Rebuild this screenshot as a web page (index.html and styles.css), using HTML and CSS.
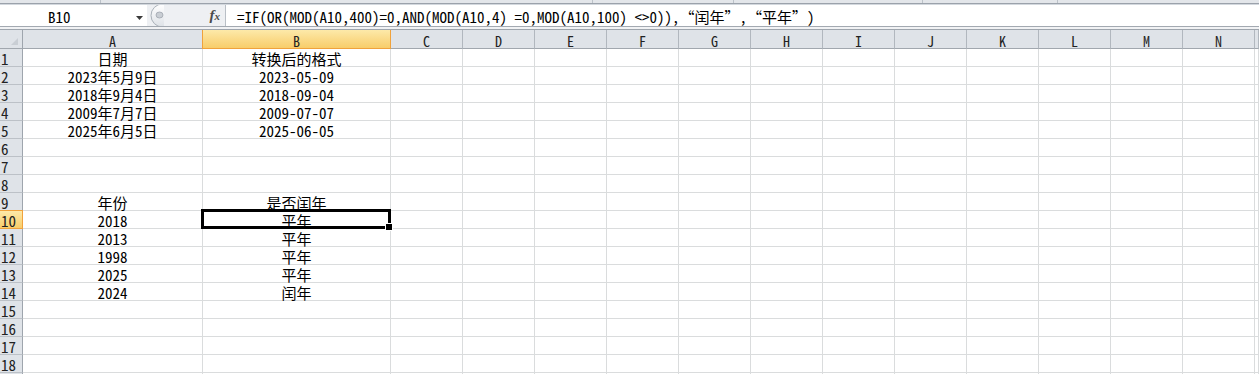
FILE: index.html
```html
<!DOCTYPE html>
<html lang="zh-CN">
<head>
<meta charset="utf-8">
<title>工作表</title>
<link rel="stylesheet" href="styles.css">
</head>
<body>
<div class="edge"><span class="e1"></span><span class="e2"></span><span class="e3"></span><span class="e4"></span><span class="e5"></span></div>
<div class="fbar">
  <div class="namebox">
    <span class="name">B10</span>
    <svg class="dd" width="7" height="4" viewBox="0 0 7 4"><path d="M0 0H7L3.5 4Z" fill="#3a3a3a"/></svg>
  </div>
  <div class="tools">
    <svg class="grip" width="15" height="21" viewBox="0 0 15 21">
      <defs><linearGradient id="gg" x1="0" y1="0" x2="0" y2="1"><stop offset="0" stop-color="#ffffff"/><stop offset="1" stop-color="#dde1e6"/></linearGradient></defs>
      <circle cx="13.5" cy="10.5" r="11.5" fill="url(#gg)" stroke="#a9b0b8"/>
      <ellipse cx="10.5" cy="10" rx="3.5" ry="3" fill="#c9ced4" stroke="#9ea5ad" stroke-width="0.8"/>
    </svg>
    <span class="fx"><i>f</i><i class="fxx">x</i></span>
  </div>
  <div class="formula">=IF(OR(MOD(A10,400)=0,AND(MOD(A10,4) =0,MOD(A10,100) &lt;&gt;0)),<span class="qo">“</span>闰年<span class="qc">”</span>,<span class="qo">“</span>平年<span class="qc">”</span>)</div>
</div>
<div class="gap"></div>
<div class="sheet">
  <div class="h corner"><svg width="22" height="18" viewBox="0 0 22 18"><path d="M18 8V15H11Z" fill="#c9ced4"/></svg></div>
  <div class="h">A</div><div class="h sel">B</div><div class="h">C</div><div class="h">D</div><div class="h">E</div><div class="h">F</div><div class="h">G</div><div class="h">H</div><div class="h">I</div><div class="h">J</div><div class="h">K</div><div class="h">L</div><div class="h">M</div><div class="h">N</div><div class="h"></div>

  <div class="rh">1</div><div class="c">日期</div><div class="c">转换后的格式</div><div class="c"></div><div class="c"></div><div class="c"></div><div class="c"></div><div class="c"></div><div class="c"></div><div class="c"></div><div class="c"></div><div class="c"></div><div class="c"></div><div class="c"></div><div class="c"></div><div class="c"></div>
  <div class="rh">2</div><div class="c">2023年5月9日</div><div class="c">2023-05-09</div><div class="c"></div><div class="c"></div><div class="c"></div><div class="c"></div><div class="c"></div><div class="c"></div><div class="c"></div><div class="c"></div><div class="c"></div><div class="c"></div><div class="c"></div><div class="c"></div><div class="c"></div>
  <div class="rh">3</div><div class="c">2018年9月4日</div><div class="c">2018-09-04</div><div class="c"></div><div class="c"></div><div class="c"></div><div class="c"></div><div class="c"></div><div class="c"></div><div class="c"></div><div class="c"></div><div class="c"></div><div class="c"></div><div class="c"></div><div class="c"></div><div class="c"></div>
  <div class="rh">4</div><div class="c">2009年7月7日</div><div class="c">2009-07-07</div><div class="c"></div><div class="c"></div><div class="c"></div><div class="c"></div><div class="c"></div><div class="c"></div><div class="c"></div><div class="c"></div><div class="c"></div><div class="c"></div><div class="c"></div><div class="c"></div><div class="c"></div>
  <div class="rh">5</div><div class="c">2025年6月5日</div><div class="c">2025-06-05</div><div class="c"></div><div class="c"></div><div class="c"></div><div class="c"></div><div class="c"></div><div class="c"></div><div class="c"></div><div class="c"></div><div class="c"></div><div class="c"></div><div class="c"></div><div class="c"></div><div class="c"></div>
  <div class="rh">6</div><div class="c"></div><div class="c"></div><div class="c"></div><div class="c"></div><div class="c"></div><div class="c"></div><div class="c"></div><div class="c"></div><div class="c"></div><div class="c"></div><div class="c"></div><div class="c"></div><div class="c"></div><div class="c"></div><div class="c"></div>
  <div class="rh">7</div><div class="c"></div><div class="c"></div><div class="c"></div><div class="c"></div><div class="c"></div><div class="c"></div><div class="c"></div><div class="c"></div><div class="c"></div><div class="c"></div><div class="c"></div><div class="c"></div><div class="c"></div><div class="c"></div><div class="c"></div>
  <div class="rh">8</div><div class="c"></div><div class="c"></div><div class="c"></div><div class="c"></div><div class="c"></div><div class="c"></div><div class="c"></div><div class="c"></div><div class="c"></div><div class="c"></div><div class="c"></div><div class="c"></div><div class="c"></div><div class="c"></div><div class="c"></div>
  <div class="rh">9</div><div class="c">年份</div><div class="c">是否闰年</div><div class="c"></div><div class="c"></div><div class="c"></div><div class="c"></div><div class="c"></div><div class="c"></div><div class="c"></div><div class="c"></div><div class="c"></div><div class="c"></div><div class="c"></div><div class="c"></div><div class="c"></div>
  <div class="rh sel">10</div><div class="c">2018</div><div class="c cur">平年</div><div class="c"></div><div class="c"></div><div class="c"></div><div class="c"></div><div class="c"></div><div class="c"></div><div class="c"></div><div class="c"></div><div class="c"></div><div class="c"></div><div class="c"></div><div class="c"></div><div class="c"></div>
  <div class="rh">11</div><div class="c">2013</div><div class="c">平年</div><div class="c"></div><div class="c"></div><div class="c"></div><div class="c"></div><div class="c"></div><div class="c"></div><div class="c"></div><div class="c"></div><div class="c"></div><div class="c"></div><div class="c"></div><div class="c"></div><div class="c"></div>
  <div class="rh">12</div><div class="c">1998</div><div class="c">平年</div><div class="c"></div><div class="c"></div><div class="c"></div><div class="c"></div><div class="c"></div><div class="c"></div><div class="c"></div><div class="c"></div><div class="c"></div><div class="c"></div><div class="c"></div><div class="c"></div><div class="c"></div>
  <div class="rh">13</div><div class="c">2025</div><div class="c">平年</div><div class="c"></div><div class="c"></div><div class="c"></div><div class="c"></div><div class="c"></div><div class="c"></div><div class="c"></div><div class="c"></div><div class="c"></div><div class="c"></div><div class="c"></div><div class="c"></div><div class="c"></div>
  <div class="rh">14</div><div class="c">2024</div><div class="c">闰年</div><div class="c"></div><div class="c"></div><div class="c"></div><div class="c"></div><div class="c"></div><div class="c"></div><div class="c"></div><div class="c"></div><div class="c"></div><div class="c"></div><div class="c"></div><div class="c"></div><div class="c"></div>
  <div class="rh">15</div><div class="c"></div><div class="c"></div><div class="c"></div><div class="c"></div><div class="c"></div><div class="c"></div><div class="c"></div><div class="c"></div><div class="c"></div><div class="c"></div><div class="c"></div><div class="c"></div><div class="c"></div><div class="c"></div><div class="c"></div>
  <div class="rh">16</div><div class="c"></div><div class="c"></div><div class="c"></div><div class="c"></div><div class="c"></div><div class="c"></div><div class="c"></div><div class="c"></div><div class="c"></div><div class="c"></div><div class="c"></div><div class="c"></div><div class="c"></div><div class="c"></div><div class="c"></div>
  <div class="rh">17</div><div class="c"></div><div class="c"></div><div class="c"></div><div class="c"></div><div class="c"></div><div class="c"></div><div class="c"></div><div class="c"></div><div class="c"></div><div class="c"></div><div class="c"></div><div class="c"></div><div class="c"></div><div class="c"></div><div class="c"></div>
  <div class="rh">18</div><div class="c"></div><div class="c"></div><div class="c"></div><div class="c"></div><div class="c"></div><div class="c"></div><div class="c"></div><div class="c"></div><div class="c"></div><div class="c"></div><div class="c"></div><div class="c"></div><div class="c"></div><div class="c"></div><div class="c"></div>
  <div class="rh"></div><div class="c"></div><div class="c"></div><div class="c"></div><div class="c"></div><div class="c"></div><div class="c"></div><div class="c"></div><div class="c"></div><div class="c"></div><div class="c"></div><div class="c"></div><div class="c"></div><div class="c"></div><div class="c"></div><div class="c"></div>
</div>
</body>
</html>
```
FILE: styles.css
```css
* { box-sizing: border-box; }
html, body { margin: 0; padding: 0; }
body {
  width: 1259px;
  height: 374px;
  overflow: hidden;
  background: #fff;
  color: #000;
  font-family: "Noto Sans Mono CJK SC", "Noto Sans CJK SC", sans-serif;
}

/* bottom edge of the ribbon */
.edge {
  display: flex;
  height: 4px;
  background: #e3e6ea;
  border-bottom: 1px solid #9ba2ab;
}
.edge span { height: 3px; border-right: 1px solid #bcc2c9; }
.e1 { width: 101px; }
.e2 { width: 492px; }
.e3 { width: 141px; }
.e4 { width: 189px; }
.e5 { width: 135px; }

/* formula bar */
.fbar {
  display: flex;
  height: 23px;
  border-top: 1px solid #d3d8de;
  border-bottom: 1px solid #a3a9b1;
  background: #fff;
}
.namebox {
  width: 147px;
  display: flex;
  align-items: flex-start;
  background: #fff;
}
.name {
  margin-left: 48px;
  padding-top: 3px;
  font-size: 15px;
  line-height: 18px;
}
.dd {
  margin-left: auto;
  margin-right: 4px;
  margin-top: 11px;
}
.tools {
  width: 79px;
  display: flex;
  align-items: center;
  background: #eef0f3;
  border-right: 1px solid #b9bfc6;
}
.grip { margin-left: 2px; }
.fx {
  margin-left: auto;
  margin-right: 5px;
  font-family: "Liberation Serif", serif;
  font-weight: bold;
  font-size: 15px;
  color: #4a4a4a;
  line-height: 21px;
}
.fx i { font-style: italic; }
.fx .fxx { font-size: 11px; }
.formula {
  flex: 1;
  padding: 3px 0 0 11px;
  font-size: 15px;
  line-height: 18px;
  white-space: nowrap;
}
.qo, .qc {
  display: inline-block;
  width: 15px;
}
.qo { text-align: right; }
.qc { text-align: left; }

.gap {
  height: 3px;
  background: #f1f2f4;
  border-bottom: 1px solid #9ea5ad;
}

/* grid */
.sheet {
  display: grid;
  grid-template-columns: 23px 180px 188px repeat(12, 72px) 4px;
  grid-template-rows: 19px repeat(19, 18px);
}
.h {
  background: #dfe3e8;
  border-right: 1px solid #b1b7be;
  border-bottom: 1px solid #a1a7ae;
  text-align: center;
  font-size: 14px;
  line-height: 14px;
  padding-top: 4px;
  color: #222;
}
.h.corner { padding: 0; border-right-color: #9ea5ad; }
.h.corner svg { display: block; }
.h.sel {
  background: linear-gradient(#fde9a9, #f8cd6a);
  border-right-color: #f0a23c;
  border-bottom-color: #f0a23c;
  box-shadow: -1px 0 0 #f0a23c;
}
.rh {
  background: #dfe3e8;
  border-right: 1px solid #9ea5ad;
  border-bottom: 1px solid #bcc1c7;
  font-size: 15px;
  line-height: 15px;
  padding: 2px 0 0 1px;
  color: #222;
  white-space: nowrap;
}
.rh.sel {
  background: linear-gradient(#fde9a9, #f8cd6a);
  border-right-color: #f0a23c;
  border-bottom-color: #f0a23c;
  box-shadow: 0 -1px 0 #f0a23c;
}
.c {
  border-right: 1px solid #dadcdd;
  border-bottom: 1px solid #dadcdd;
  text-align: center;
  font-size: 15px;
  line-height: 15px;
  padding-top: 2px;
  white-space: nowrap;
}
.c.cur { position: relative; }
.c.cur::after {
  content: "";
  position: absolute;
  left: -2px;
  top: -2px;
  right: -1px;
  bottom: -1px;
  border: 3px solid #000;
  z-index: 1;
}
.c.cur::before {
  content: "";
  position: absolute;
  right: -2px;
  bottom: -2px;
  width: 6px;
  height: 6px;
  background: #000;
  box-shadow: 0 0 0 1px #fff;
  z-index: 2;
}
```
